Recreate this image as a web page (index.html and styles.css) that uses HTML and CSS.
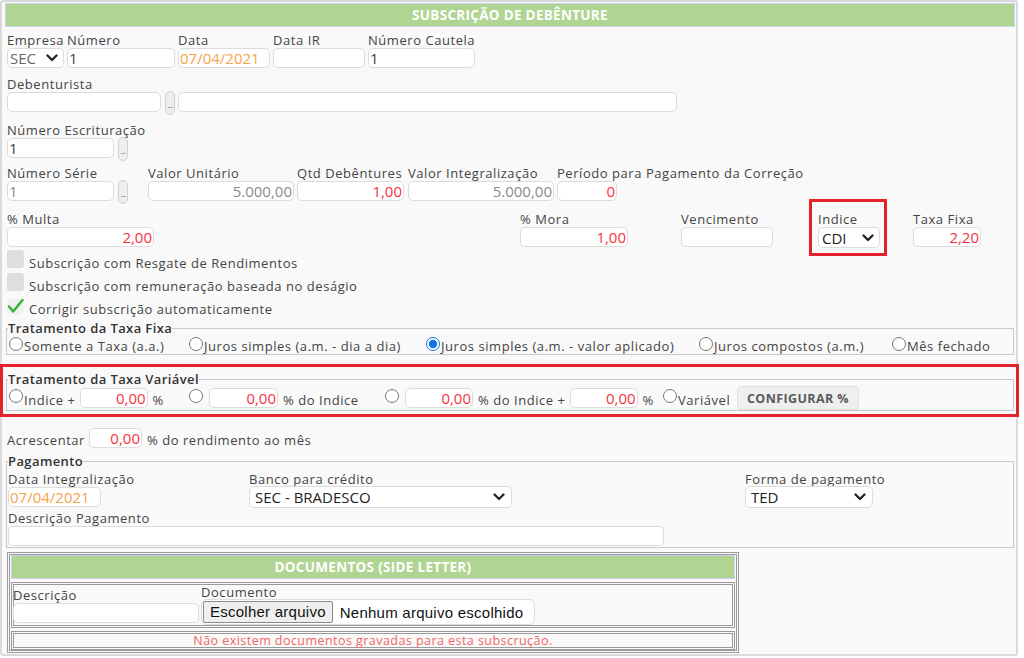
FILE: index.html
```html
<!DOCTYPE html>
<html lang="pt-BR">
<head>
<meta charset="utf-8">
<title>Subscrição de Debênture</title>
<link rel="stylesheet" href="styles.css">
</head>
<body>
<div class="panel">
  <div class="title">SUBSCRIÇÃO DE DEBÊNTURE</div>
  <div class="body">
    <div class="row r1">
      <div class="field w57"><label>Empresa</label>
        <div class="sel sel-emp"><span>SEC</span><svg class="chev" viewBox="0 0 12 8"><path d="M1.5 1.5 6 6l4.5-4.5"/></svg></div>
      </div>
      <div class="field w108"><label>Número</label><input class="inp" value="1"></div>
      <div class="field w92"><label>Data</label><input class="inp orange" value="07/04/2021"></div>
      <div class="field w92"><label>Data IR</label><input class="inp" value=""></div>
      <div class="field w107"><label>Número Cautela</label><input class="inp" value="1"></div>
    </div>

    <div class="row r2">
      <div class="field"><label>Debenturista</label>
        <div class="ctl">
          <input class="inp w154" value="">
          <button class="dots">...</button>
          <input class="inp w499 ml3" value="">
        </div>
      </div>
    </div>

    <div class="row r3">
      <div class="field"><label>Número Escrituração</label>
        <div class="ctl"><input class="inp w107" value="1"><button class="dots">...</button></div>
      </div>
    </div>

    <div class="row r4">
      <div class="field w121"><label>Número Série</label>
        <div class="ctl"><input class="inp w107 grey" value="1"><button class="dots">...</button></div>
      </div>
      <div class="field w146 ml20"><label>Valor Unitário</label><input class="inp num grey" value="5.000,00"></div>
      <div class="field w107 ml3"><label>Qtd Debêntures</label><input class="inp num red" value="1,00"></div>
      <div class="field w146 ml4"><label>Valor Integralização</label><input class="inp num grey" value="5.000,00"></div>
      <div class="field w60 ml3"><label>Período para Pagamento da Correção</label><input class="inp num red" value="0"></div>
    </div>

    <div class="row r5">
      <div class="field w147"><label>% Multa</label><input class="inp num red" value="2,00"></div>
      <div class="field w108 ml366"><label>% Mora</label><input class="inp num red" value="1,00"></div>
      <div class="field w92 ml53"><label>Vencimento</label><input class="inp" value=""></div>
      <div class="field w62 ml45 boxed"><label>Indice</label>
        <div class="sel sel-cdi"><span>CDI</span><svg class="chev" viewBox="0 0 12 8"><path d="M1.5 1.5 6 6l4.5-4.5"/></svg></div>
      </div>
      <div class="field w68 ml33"><label>Taxa Fixa</label><input class="inp num red" value="2,20"></div>
    </div>

    <div class="checks">
      <div class="chk"><span class="cbox"></span><span class="ctext">Subscrição com Resgate de Rendimentos</span></div>
      <div class="chk"><span class="cbox"></span><span class="ctext">Subscrição com remuneração baseada no deságio</span></div>
      <div class="chk"><svg class="tick" viewBox="0 0 17 17"><rect x="0.5" y="0.5" width="16" height="16" rx="5" class="tick-bg"/><path d="M2 8.5 6.2 13.5 15.5 2"/></svg><span class="ctext">Corrigir subscrição automaticamente</span></div>
    </div>

    <fieldset class="fs fs-fixa">
      <legend>Tratamento da Taxa Fixa</legend>
      <div class="radios">
        <label class="ropt w180"><input type="radio" name="fixa">Somente a Taxa (a.a.)</label>
        <label class="ropt w237"><input type="radio" name="fixa">Juros simples (a.m. - dia a dia)</label>
        <label class="ropt w273"><input type="radio" name="fixa" checked>Juros simples (a.m. - valor aplicado)</label>
        <label class="ropt w193"><input type="radio" name="fixa">Juros compostos (a.m.)</label>
        <label class="ropt"><input type="radio" name="fixa">Mês fechado</label>
      </div>
    </fieldset>

    <div class="hl">
      <fieldset class="fs fs-var">
        <legend>Tratamento da Taxa Variável</legend>
        <div class="vrow">
          <div class="vg w180"><input type="radio" name="var"><span>Indice +</span><input class="inp num red w68 ml4" value="0,00"><span class="ml5">%</span></div>
          <div class="vg w196"><input type="radio" name="var"><input class="inp num red w69 ml5" value="0,00"><span class="ml5">% do Indice</span></div>
          <div class="vg w278"><input type="radio" name="var"><input class="inp num red w68 ml5" value="0,00"><span class="ml5">% do Indice +</span><input class="inp num red w68 ml4" value="0,00"><span class="ml5">%</span></div>
          <div class="vg w76"><input type="radio" name="var"><span>Variável</span></div>
          <button class="cfg">CONFIGURAR %</button>
        </div>
      </fieldset>
    </div>

    <div class="row acr">
      <span>Acrescentar</span><input class="inp num red w53 ml4" value="0,00"><span class="ml5">% do rendimento ao mês</span>
    </div>

    <fieldset class="fs fs-pag">
      <legend>Pagamento</legend>
      <div class="row p1">
        <div class="field w93"><label>Data Integralização</label><input class="inp orange" value="07/04/2021"></div>
        <div class="field w263 ml148"><label>Banco para crédito</label>
          <div class="sel sel-big"><span>SEC - BRADESCO</span><svg class="chev" viewBox="0 0 12 8"><path d="M1.5 1.5 6 6l4.5-4.5"/></svg></div>
        </div>
        <div class="field w128 ml233"><label>Forma de pagamento</label>
          <div class="sel sel-big"><span>TED</span><svg class="chev" viewBox="0 0 12 8"><path d="M1.5 1.5 6 6l4.5-4.5"/></svg></div>
        </div>
      </div>
      <div class="row p2">
        <div class="field w656"><label>Descrição Pagamento</label><input class="inp" value=""></div>
      </div>
    </fieldset>

    <div class="doc">
      <div class="doc-title">DOCUMENTOS (SIDE LETTER)</div>
      <div class="doc-row">
        <div class="field w186 d1"><label>Descrição</label><input class="inp" value=""></div>
        <div class="field d2"><label>Documento</label>
          <div class="file"><span class="fbtn">Escolher arquivo</span><span class="ftxt">Nenhum arquivo escolhido</span></div>
        </div>
      </div>
      <div class="doc-msg">Não existem documentos gravadas para esta subscrução.</div>
    </div>
  </div>
</div>
</body>
</html>
```
FILE: styles.css
```css
* { box-sizing: border-box; }
html, body { margin: 0; }
body {
  background: #fff;
  font-family: "Open Sans", "Noto Sans", sans-serif;
  font-size: 13px;
  color: #444;
  letter-spacing: 0.55px;
}
.panel {
  width: 1018px;
  height: 656px;
  border: 2px solid #dadada;
  border-radius: 3px;
  background: #f9f9f9;
  padding: 1px 1px 0 3px;
}
.title {
  height: 24px;
  border: 1px solid #cdd3ee;
  background: #b0d492;
  color: #fff;
  font-weight: 700;
  font-size: 13.5px;
  line-height: 22px;
  text-align: center;
  letter-spacing: 0.3px;
}
.body { padding-left: 2px; }
.row { display: flex; align-items: flex-start; }
.field { display: flex; flex-direction: column; flex: none; }
.field > label { display: block; height: 16px; line-height: 16px; white-space: nowrap; }
.ctl { display: flex; align-items: flex-start; }

.inp {
  display: block;
  height: 20px;
  width: 100%;
  border: 1px solid #dcdcdc;
  border-radius: 5px;
  background: #fff;
  font-family: "Open Sans", sans-serif;
  font-size: 15px;
  letter-spacing: 0;
  color: #444;
  padding: 0 1px;
  margin: 0;
  outline: none;
}
.inp.num { text-align: right; }
.inp.red { color: #f5333f; }
.inp.orange { color: #f6a54a; }
.inp.grey { color: #8a8a8a; }

.dots {
  width: 10px;
  height: 24px;
  margin: -1px 0 0 4px;
  border: 1px solid #cfcfcf;
  border-radius: 5px;
  background: #eee;
  font-size: 7px;
  line-height: 7px;
  color: #555;
  letter-spacing: -0.5px;
  display: flex;
  align-items: flex-end;
  justify-content: center;
  padding: 0 0 4px 0;
  overflow: visible;
  font-family: "DejaVu Sans", sans-serif;
}

.sel {
  height: 20px;
  border: 1px solid #dcdcdc;
  border-radius: 5px;
  background: #fff;
  font-size: 15px;
  letter-spacing: 0;
  line-height: 18px;
  display: flex;
  align-items: center;
  justify-content: space-between;
  padding: 0 5px 0 2px;
  color: #222;
}
.sel-emp { color: #666; }
.sel-cdi { padding-left: 3px; padding-right: 5px; height: 21px; }
.sel-big { height: 22px; margin-top: -1px; padding-left: 5px; padding-right: 6px; }
.chev { width: 12px; height: 8px; fill: none; stroke: #222; stroke-width: 2.3; stroke-linecap: round; stroke-linejoin: round; }

.r1 { margin-top: 5px; gap: 3px; }
.r2 { margin-top: 8px; }
.r3 { margin-top: 7px; }
.r4 { margin-top: 4px; }
.r5 { margin-top: 7px; }

.w53 { width: 53px; } .w57 { width: 57px; } .w60 { width: 60px; } .w62 { width: 62px; }
.w68 { width: 68px; } .w69 { width: 69px; } .w76 { width: 76px; } .w92 { width: 92px; }
.w93 { width: 93px; } .w107 { width: 107px; } .w108 { width: 108px; } .w121 { width: 121px; }
.w128 { width: 128px; } .w146 { width: 146px; } .w147 { width: 147px; } .w154 { width: 154px; }
.w180 { width: 180px; } .w186 { width: 186px; } .w193 { width: 193px; } .w196 { width: 196px; }
.w237 { width: 237px; } .w263 { width: 263px; } .w273 { width: 273px; } .w278 { width: 278px; }
.w499 { width: 499px; } .w656 { width: 656px; }
.ml3 { margin-left: 3px; } .ml4 { margin-left: 4px; } .ml5 { margin-left: 5px; } .ml20 { margin-left: 20px; }
.ml33 { margin-left: 33px; } .ml45 { margin-left: 45px; } .ml53 { margin-left: 53px; }
.ml148 { margin-left: 148px; } .ml233 { margin-left: 233px; } .ml366 { margin-left: 366px; }

.boxed { position: relative; }
.boxed::after {
  content: "";
  position: absolute;
  top: -12px; left: -9px; right: -7px; bottom: -8px;
  border: 3px solid #e3222b;
  pointer-events: none;
}

.checks { margin-top: 2px; }
.chk { display: flex; align-items: flex-start; height: 23px; }
.cbox { width: 17px; height: 18px; background: #dedede; border-radius: 3px; flex: none; }
.ctext { padding-top: 5px; line-height: 16px; margin-left: 5px; white-space: nowrap; }
.tick { width: 17px; height: 17px; margin-top: 2px; flex: none; fill: none; }
.tick path { stroke: #36b236; stroke-width: 2.4; stroke-linecap: round; stroke-linejoin: round; }
.tick-bg { fill: #f0f0f0; stroke: none; }

.fs {
  margin: 0 1px 0 -1px;
  padding: 0;
  border: 1px solid #c9c9c9;
  min-inline-size: auto;
}
.fs legend {
  padding: 0;
  margin-left: 1px;
  font-weight: 600;
  font-size: 13px;
  line-height: 12px;
  color: #333;
  letter-spacing: 0.4px;
}
.fs-fixa { margin-top: 3px; }
.radios { display: flex; align-items: flex-start; padding-top: 4px; height: 20px; }
.ropt { display: flex; align-items: flex-start; line-height: 16px; white-space: nowrap; flex: none; }
input[type=radio] {
  width: 14px; height: 14px; margin: -1px 1px 0 2px; flex: none; accent-color: #1473e6;
}

.hl { position: relative; margin-top: 18px; }
.hl::after {
  content: "";
  position: absolute;
  top: -9px; left: -7px; right: -4px; bottom: -6px;
  border: 3px solid #e3222b;
  pointer-events: none;
}
.fs-var { margin-top: 0; padding-top: 3px; padding-bottom: 2px; }
.vrow { display: flex; align-items: flex-start; height: 20px; }
.vg { display: flex; align-items: flex-start; flex: none; line-height: 16px; }
.vg > span { padding-top: 4px; white-space: nowrap; }
.vg input[type=radio] { margin-top: 1px; }
.vg .inp { width: auto; }
.vg .inp.w68 { width: 68px; }
.vg .inp.w69 { width: 69px; }
.cfg {
  margin-top: -2px;
  width: 122px;
  height: 24px;
  border: 1px solid #e0e0e0;
  border-radius: 4px;
  background: #efefef;
  font-family: "Open Sans", sans-serif;
  font-weight: 700;
  font-size: 12.5px;
  color: #5a5a5a;
  letter-spacing: 0.4px;
  padding: 0;
}

.acr { margin-top: 17px; align-items: center; height: 20px; }
.acr .inp { width: 53px; }
.acr span { padding-top: 3px; }

.fs-pag { margin-top: 7px; padding-bottom: 1px; }
.p1 { margin-top: 4px; }
.p2 { margin-top: 2px; }
.fs-pag .field { margin-left: 1px; }
.fs-pag .ml148 { margin-left: 148px; }
.fs-pag .ml233 { margin-left: 233px; }

.doc {
  margin-top: 4px;
  width: 732px;
  border: 3px double #9a9a9a;
  padding: 0 1px;
  display: flex;
  flex-direction: column;
  gap: 3px;
}
.doc-title {
  height: 24px;
  border: 1px solid #cdd3ee;
  background: #b0d492;
  color: #fff;
  font-weight: 700;
  font-size: 13.5px;
  line-height: 22px;
  text-align: center;
  letter-spacing: 0.3px;
}
.doc-row {
  height: 46px;
  border: 3px double #9a9a9a;
  display: flex;
  align-items: flex-start;
}
.d1 { margin-left: -1px; padding-top: 2px; }
.d2 { margin-left: 2px; }
.d2 > label { height: 14px; line-height: 14px; }
.file {
  width: 334px;
  height: 26px;
  border: 1px solid #dcdcdc;
  border-radius: 6px;
  background: #fff;
  display: flex;
  align-items: center;
  padding: 0 1px;
  font-family: "Liberation Sans", Arial, sans-serif;
  font-size: 15px;
  letter-spacing: 0.25px;
  color: #111;
}
.fbtn {
  height: 22px;
  line-height: 20px;
  padding: 0 6px;
  background: #efefef;
  border: 1px solid #8a8a8a;
  border-radius: 2px;
  white-space: nowrap;
}
.ftxt { margin-left: 7px; white-space: nowrap; }
.doc-msg {
  height: 19px;
  border: 3px double #9a9a9a;
  text-align: center;
  font-size: 12.5px;
  line-height: 13px;
  color: #f06666;
  letter-spacing: 0.45px;
}
```
